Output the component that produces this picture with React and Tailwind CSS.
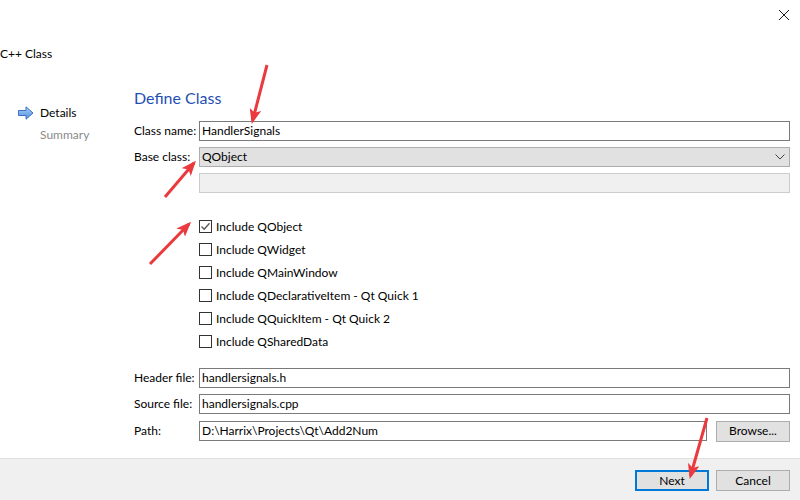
const labelCls = "w-[65px] shrink-0";

function Field({ label, value }) {
  return (
    <div className="flex items-center h-[20px]">
      <span className={labelCls}>{label}</span>
      <div className="flex-1 h-[20px] border border-[#7a7a7a] bg-white px-[2px] flex items-center">
        {value}
      </div>
    </div>
  );
}

function Check({ label, checked }) {
  return (
    <div className="flex items-center h-[23px]">
      <div className="w-[13px] h-[13px] border border-[#333] bg-white flex items-center justify-center">
        {checked && (
          <svg width="11" height="11" viewBox="0 0 11 11">
            <path d="M1.5 5.5 L4.2 8.2 L9.5 2.2" fill="none" stroke="#555" strokeWidth="1.3" />
          </svg>
        )}
      </div>
      <span className="ml-[4px]">{label}</span>
    </div>
  );
}

export default function App() {
  const options = [
    "Include QObject",
    "Include QWidget",
    "Include QMainWindow",
    "Include QDeclarativeItem - Qt Quick 1",
    "Include QQuickItem - Qt Quick 2",
    "Include QSharedData",
  ];

  return (
    <div className="relative w-[800px] h-[500px] bg-white flex flex-col text-[12px] text-black font-['Lato',sans-serif] overflow-hidden">
      {/* title area */}
      <div className="h-[30px] flex justify-end items-center pr-[10px]">
        <svg width="12" height="12" viewBox="0 0 12 12">
          <path d="M1 1 L11 11 M11 1 L1 11" stroke="#222" strokeWidth="1" />
        </svg>
      </div>
      <div className="mt-[16px] h-[16px] leading-[16px]">C++ Class</div>

      <div className="flex flex-1">
        {/* side steps */}
        <div className="w-[134px] shrink-0 pl-[18px] pt-[43px]">
          <div className="flex items-center h-[16px]">
            <svg width="16" height="14" viewBox="0 0 16 14">
              <defs>
                <linearGradient id="ag" x1="0" y1="0" x2="0" y2="1">
                  <stop offset="0" stopColor="#a9d0f7" />
                  <stop offset="1" stopColor="#4f8fe0" />
                </linearGradient>
              </defs>
              <path d="M0.5 4.5 L8 4.5 L8 0.8 L15 7 L8 13.2 L8 9.5 L0.5 9.5 Z" fill="url(#ag)" stroke="#3d6fc6" strokeWidth="1" />
            </svg>
            <span className="ml-[6px]">Details</span>
          </div>
          <div className="h-[16px] mt-[5px] pl-[22px] text-[#8a8a8a]">Summary</div>
        </div>

        {/* form */}
        <div className="flex-1 pr-[10px] pt-[26px] flex flex-col">
          <div className="h-[20px] leading-[20px] text-[16px] text-[#1f4fb5]">Define Class</div>
          <div className="mt-[13px] flex flex-col gap-[6px]">
            <Field label="Class name:" value="HandlerSignals" />
            <div className="flex items-center h-[20px]">
              <span className={labelCls}>Base class:</span>
              <div className="flex-1 h-[20px] border border-[#adadad] bg-[#e1e1e1] pl-[2px] pr-[4px] flex items-center justify-between">
                <span>QObject</span>
                <svg width="10" height="6" viewBox="0 0 10 6">
                  <path d="M0.5 0.5 L5 5 L9.5 0.5" fill="none" stroke="#444" strokeWidth="1" />
                </svg>
              </div>
            </div>
            <div className="flex items-center h-[20px]">
              <span className={labelCls}></span>
              <div className="flex-1 h-[20px] border border-[#cccccc] bg-[#f0f0f0]" />
            </div>
          </div>

          <div className="mt-[22px] pl-[65px] flex flex-col">
            {options.map((o, i) => (
              <Check key={o} label={o} checked={i === 0} />
            ))}
          </div>

          <div className="mt-[15px] flex flex-col">
            <Field label="Header file:" value="handlersignals.h" />
            <div className="mt-[6px]">
              <Field label="Source file:" value="handlersignals.cpp" />
            </div>
            <div className="mt-[7px] flex items-center h-[20px]">
              <span className={labelCls}>Path:</span>
              <div className="flex-1 h-[20px] border border-[#7a7a7a] bg-white px-[2px] flex items-center">
                D:\Harrix\Projects\Qt\Add2Num
              </div>
              <button className="ml-[9px] w-[74px] h-[21px] border border-[#adadad] bg-[#e1e1e1]">Browse...</button>
            </div>
          </div>
        </div>
      </div>

      {/* footer */}
      <div className="h-[42px] border-t border-[#dfdfdf] bg-[#f0f0f0] flex justify-end items-start pt-[11px] pr-[10px] gap-[7px]">
        <button className="w-[74px] h-[21px] border-2 border-[#0078d7] bg-[#e1e1e1]">Next</button>
        <button className="w-[74px] h-[21px] border border-[#adadad] bg-[#e1e1e1]">Cancel</button>
      </div>

      {/* annotation arrows */}
      <svg className="absolute inset-0 pointer-events-none" width="800" height="500">
        <defs>
          <marker id="ah" markerWidth="5" markerHeight="4" refX="4" refY="2" orient="auto" markerUnits="strokeWidth">
            <path d="M0 0 L5 2 L0 4 L1.2 2 Z" fill="#ea3a3d" />
          </marker>
        </defs>
        <g stroke="#ea3a3d" strokeWidth="3" markerEnd="url(#ah)">
          <line x1="267" y1="65" x2="252.5" y2="121" />
          <line x1="165" y1="197" x2="194" y2="163" />
          <line x1="150" y1="264" x2="189" y2="224" />
          <line x1="707" y1="418" x2="690.5" y2="476" />
        </g>
      </svg>
    </div>
  );
}
